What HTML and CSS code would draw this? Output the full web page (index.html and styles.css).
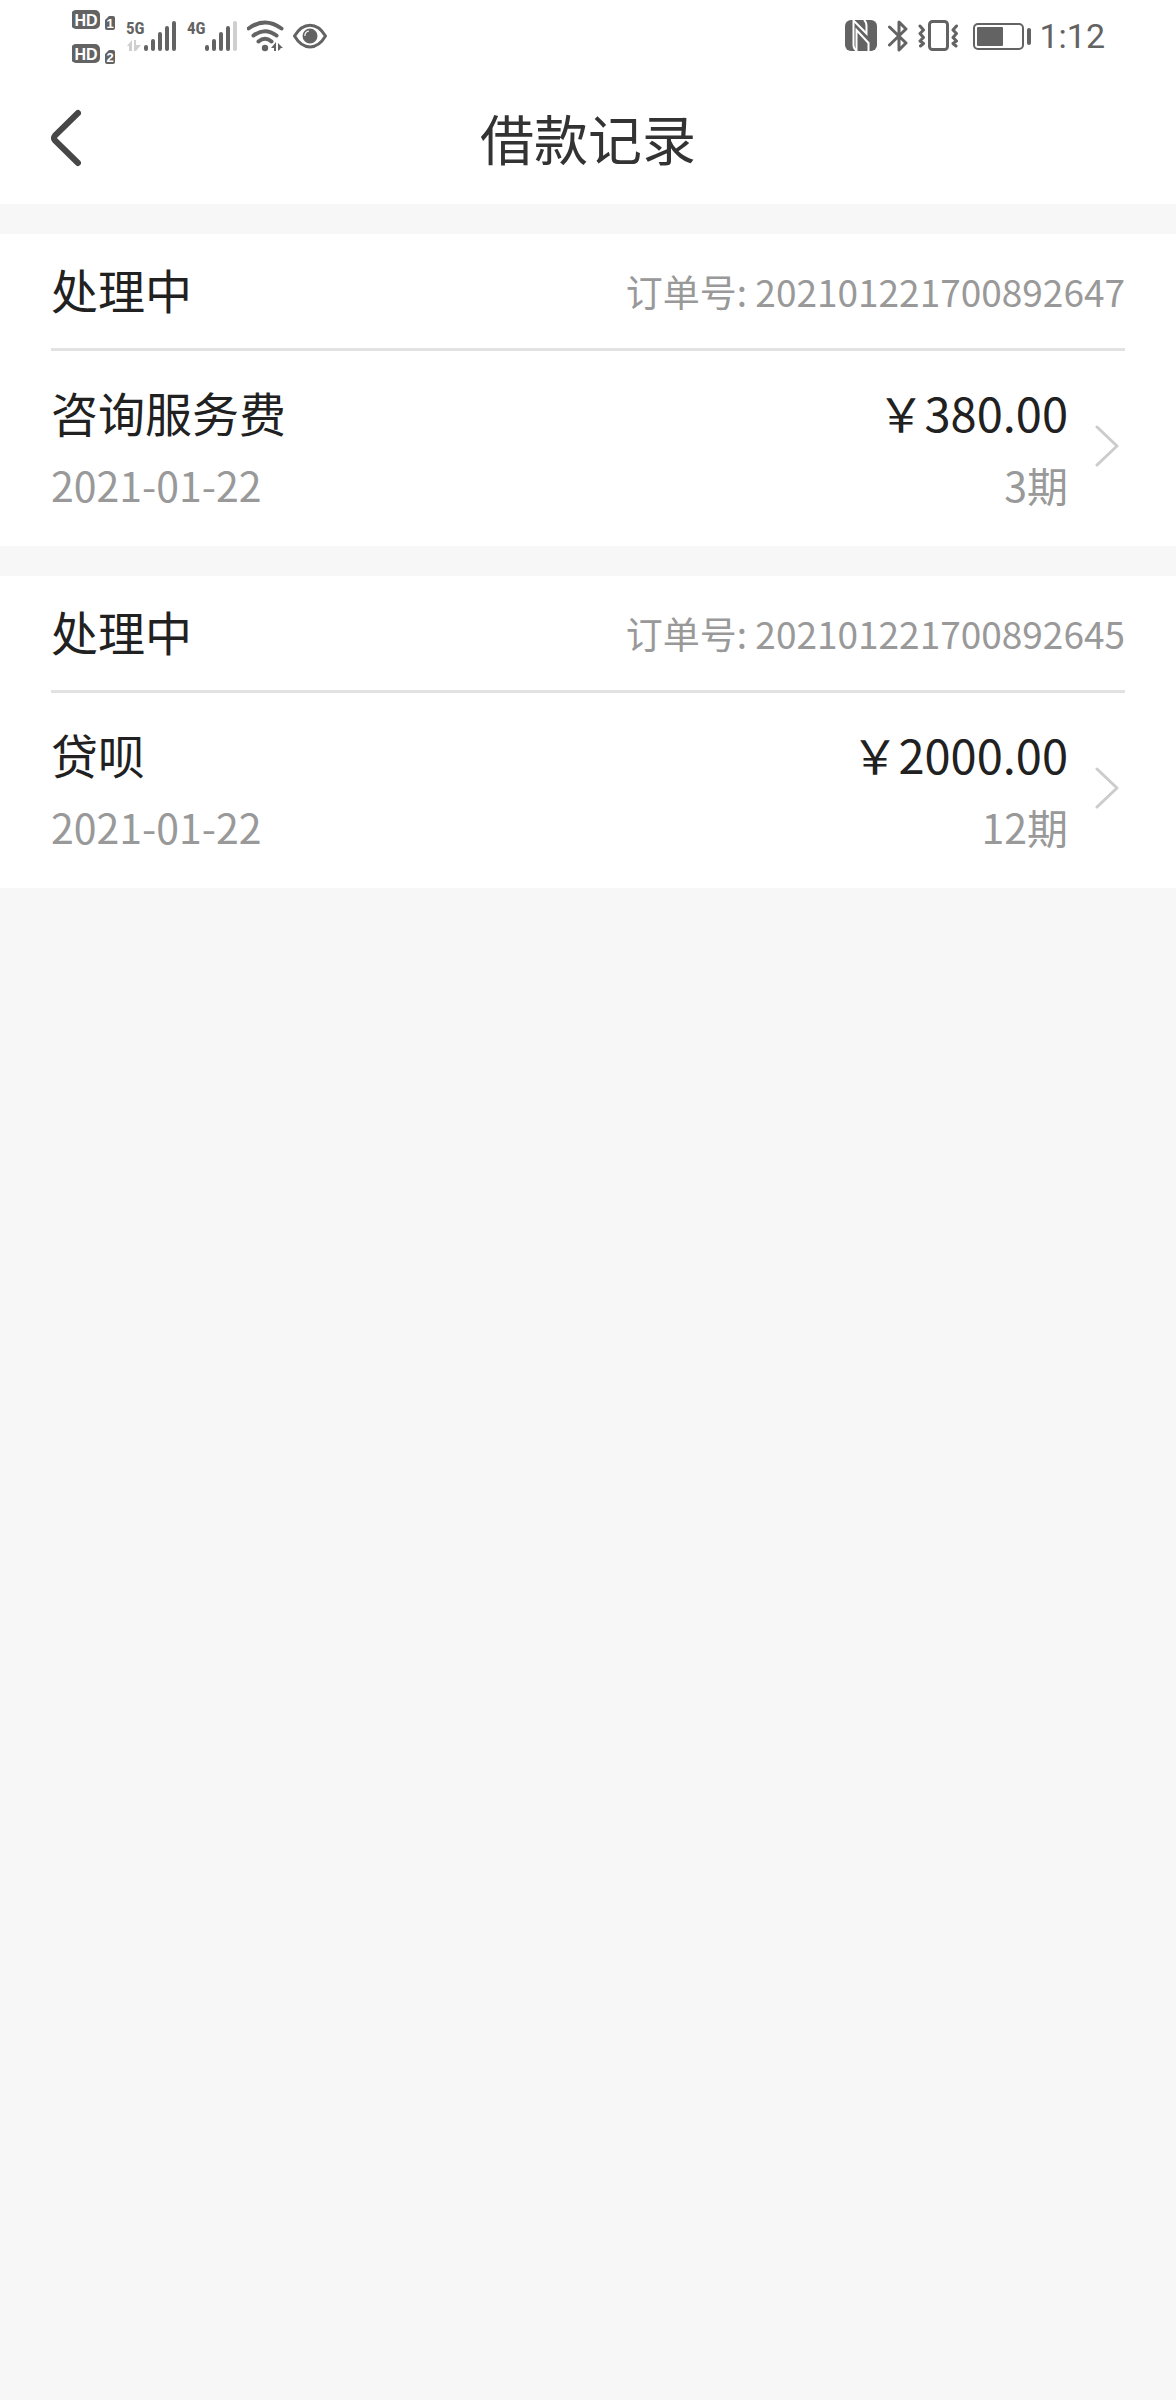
FILE: index.html
```html
<!DOCTYPE html>
<html lang="zh-CN">
<head>
<meta charset="utf-8">
<meta name="viewport" content="width=device-width, initial-scale=1">
<title>借款记录</title>
<link rel="stylesheet" href="styles.css">
</head>
<body>
<div class="statusbar">
  <div class="status-group">
    <svg class="icon" width="45" height="72" viewBox="72 0 45 72" aria-hidden="true">
      <rect x="71" y="10" width="29" height="19" rx="5" />
      <text class="badge-text" x="86" y="26" text-anchor="middle">HD</text>
      <path d="M109 16h4a2 2 0 0 1 2 2v10a2 2 0 0 1-2 2h-6a2 2 0 0 1-2-2v-8z" />
      <text class="badge-num" x="110" y="28" text-anchor="middle">1</text>
      <rect x="71" y="44" width="29" height="19" rx="5" />
      <text class="badge-text" x="86" y="60" text-anchor="middle">HD</text>
      <path d="M109 50h4a2 2 0 0 1 2 2v10a2 2 0 0 1-2 2h-6a2 2 0 0 1-2-2v-8z" />
      <text class="badge-num" x="110" y="62" text-anchor="middle">2</text>
    </svg>
    <svg class="icon" width="52" height="72" viewBox="126 0 52 72" aria-hidden="true">
      <text class="net-text" x="126" y="34">5G</text>
      <path class="faint" d="M127 46l5-6v11h-3v-5zM134 40h2v5h5l-5 6h-2z" />
      <path class="bars" d="M146 47v2M153 41v8M160 34v15M167 28v21M174 23v26" />
    </svg>
    <svg class="icon" width="51" height="72" viewBox="187 0 51 72" aria-hidden="true">
      <text class="net-text" x="187" y="34">4G</text>
      <path class="bars" d="M207 47v2M214 41v8M221 34v15M228 28v21" />
      <path class="bars bars-off" d="M235 23v26" />
    </svg>
    <svg class="icon" width="37" height="72" viewBox="247 0 37 72" aria-hidden="true">
      <path class="wave" d="M248.500 28.500Q265 16.500 281.500 28.500M253.500 35.500Q265 27 276.500 35.500M258.500 41.500Q265 36 271.500 41.500" />
      <circle cx="265" cy="48" r="3.200" />
      <path d="M271 48l5-6v9h-2v-3zM278 43l5 5h-2.500v1l-2.500 2z" />
    </svg>
    <svg class="icon" width="34" height="72" viewBox="293 0 34 72" aria-hidden="true">
      <path class="line" d="M294.500 36C303 21.500 317 21.500 325.500 36C317 50.500 303 50.500 294.500 36Z" />
      <path d="M310 28.500a7.500 7.500 0 1 0 7.500 7.500a7.500 7.500 0 0 0-7.500-7.500zm-1 3a4.500 4.500 0 0 0-3.500 4.500h-1.200a5.500 5.500 0 0 1 4.700-5.500z" />
    </svg>
  </div>
  <div class="status-group status-right">
    <svg class="icon" width="35" height="72" viewBox="845 0 35 72" aria-hidden="true">
      <rect x="845" y="20" width="32" height="31" rx="6" />
      <path class="nfc-cut" d="M853.500 20V45Q853.500 49 857 51M854 21L866.500 33.500V26Q866.500 22 864 20M856.500 51V30L868.500 43V51" />
    </svg>
    <svg class="icon" width="22" height="72" viewBox="888 0 22 72" aria-hidden="true">
      <path class="line" d="M889.500 27L906 43L899 50V22L906 29L889.500 45" />
    </svg>
    <svg class="icon" width="47" height="72" viewBox="918 0 47 72" aria-hidden="true">
      <rect class="line" x="929.500" y="21.500" width="18" height="28" rx="3" />
      <path class="line" d="M920 26l3.500 4-3.500 3.500 3.500 4-3.500 3.500 3.500 2.500-3 2.500M956.500 26l-3.500 4 3.500 3.500-3.500 4 3.500 3.500-3.500 2.500 3 2.500" />
    </svg>
    <svg class="icon" width="58" height="72" viewBox="973 0 58 72" aria-hidden="true">
      <rect class="thin" x="974" y="24" width="49" height="25" rx="4" />
      <rect x="977" y="27" width="26" height="19" rx="1" />
      <rect x="1027" y="28" width="4" height="17" rx="2" />
    </svg>
    <time class="clock" datetime="01:12">1:12</time>
  </div>
</div>

<header class="navbar">
  <button class="back" type="button" aria-label="返回">
    <svg width="30" height="58" viewBox="0 0 30 58" aria-hidden="true"><path d="M27 4L4 26.500Q2 29 4 31.500L27 54" /></svg>
  </button>
  <h1 class="title">借款记录</h1>
</header>

<main class="records">
  <article class="card">
    <div class="card-head">
      <h2 class="state">处理中</h2>
      <p class="order">订单号: 202101221700892647</p>
    </div>
    <a class="card-body" href="#202101221700892647">
      <span class="info"><span class="main-text">咨询服务费</span><span class="sub-text">2021-01-22</span></span>
      <span class="info info-end"><span class="main-text">&#xFFE5;380.00</span><span class="sub-text">3期</span></span>
      <svg class="chevron" width="24" height="42" viewBox="0 0 24 42" aria-hidden="true"><path d="M2 2L22 21L2 40" /></svg>
    </a>
  </article>
  <article class="card">
    <div class="card-head">
      <h2 class="state">处理中</h2>
      <p class="order">订单号: 202101221700892645</p>
    </div>
    <a class="card-body" href="#202101221700892645">
      <span class="info"><span class="main-text">贷呗</span><span class="sub-text">2021-01-22</span></span>
      <span class="info info-end"><span class="main-text">&#xFFE5;2000.00</span><span class="sub-text">12期</span></span>
      <svg class="chevron" width="24" height="42" viewBox="0 0 24 42" aria-hidden="true"><path d="M2 2L22 21L2 40" /></svg>
    </a>
  </article>
</main>
</body>
</html>
```
FILE: styles.css
```css
* {
  box-sizing: border-box;
}

body {
  margin: 0;
  min-height: 100vh;
  background: #f7f7f7;
  color: #212121;
  font-family: "Noto Sans CJK SC", sans-serif;
}

h1,
h2,
p {
  margin: 0;
  font-weight: 400;
}

/* Status bar */
.statusbar {
  display: flex;
  justify-content: space-between;
  height: 72px;
  padding: 0 71px 0 72px;
  background: #fff;
  color: #636363;
}

.status-group {
  display: flex;
  align-items: center;
  gap: 9px;
}

.status-right {
  gap: 8px;
}

.icon {
  display: block;
  fill: #636363;
}

.badge-text,
.badge-num,
.net-text {
  font-family: "Liberation Sans", sans-serif;
  font-weight: 700;
}

.badge-text {
  fill: #fff;
  font-size: 16px;
}

.badge-num {
  fill: #fff;
  font-size: 13px;
}

.net-text {
  font-family: "Roboto Condensed", "Liberation Sans Narrow", Roboto, sans-serif;
  font-size: 17px;
}

.faint {
  fill: #cfcfcf;
}

.bars,
.wave,
.line,
.thin {
  fill: none;
  stroke: #636363;
  stroke-width: 4px;
  stroke-linecap: round;
}

.bars-off {
  stroke: #cfcfcf;
}

.line {
  stroke-width: 3px;
  stroke-linejoin: round;
}

.thin {
  stroke-width: 2px;
}

.nfc-cut {
  fill: none;
  stroke: #fff;
  stroke-width: 2px;
}

.clock {
  font-family: Roboto, sans-serif;
  font-size: 34px;
  line-height: 74px;
}

/* Title bar */
.navbar {
  display: grid;
  grid-template-columns: 1fr auto 1fr;
  align-items: center;
  height: 132px;
  padding: 0 51px;
  background: #fff;
}

.back {
  justify-self: start;
  padding: 0;
  border: 0;
  background: none;
}

.back svg {
  display: block;
  fill: none;
  stroke: #474747;
  stroke-width: 6px;
  stroke-linecap: round;
}

.title {
  color: #333;
  font-size: 54px;
  line-height: 78px;
}

/* Loan records */
.records {
  display: flex;
  flex-direction: column;
  gap: 30px;
  padding-top: 30px;
}

.card {
  padding: 0 51px;
  background: #fff;
}

.card-head {
  display: flex;
  align-items: flex-end;
  justify-content: space-between;
  padding: 21px 0 25px;
  border-bottom: 3px solid #e2e2e2;
}

.state,
.main-text {
  font-size: 47px;
  line-height: 68px;
}

.order {
  color: #999;
  font-size: 37px;
  line-height: 64px;
}

.card-body {
  display: flex;
  align-items: center;
  padding: 27px 6px 32px 0;
  color: inherit;
  text-decoration: none;
}

.info {
  display: flex;
  flex-direction: column;
  flex: 1;
  gap: 8px;
}

.info-end {
  align-items: flex-end;
}

.sub-text {
  color: #999;
  font-size: 41px;
  line-height: 60px;
}

.chevron {
  margin-left: 27px;
  fill: none;
  stroke: #ccc;
  stroke-width: 3px;
  stroke-linecap: round;
  stroke-linejoin: round;
}
```
